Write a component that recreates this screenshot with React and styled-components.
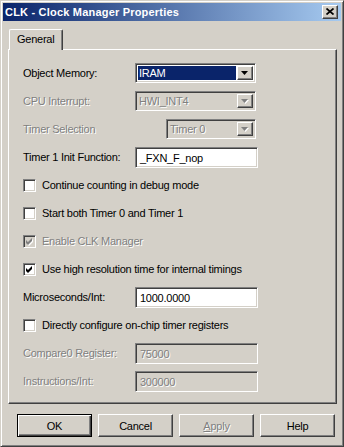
import React from "react";
import styled, { createGlobalStyle, css } from "styled-components";

const GlobalStyle = createGlobalStyle`
  html, body {
    margin: 0;
    padding: 0;
    background: #d4d0c8;
  }
  * {
    box-sizing: border-box;
  }
`;

const face = "#d4d0c8";
const shadow = "#808080";
const dark = "#404040";

const disabledText = css`
  color: ${shadow};
  text-shadow: 1px 1px 0 #fff;
`;

const Window = styled.div`
  width: 344px;
  height: 447px;
  display: flex;
  flex-direction: column;
  padding: 2px;
  background: ${face};
  border: 1px solid;
  border-color: ${face} ${dark} ${dark} ${face};
  box-shadow: inset 1px 1px #fff, inset -1px -1px ${shadow};
  font-family: "Liberation Sans", Arial, sans-serif;
  font-size: 11px;
  letter-spacing: -0.25px;
  color: #000;
`;

const TitleBar = styled.div`
  height: 18px;
  display: flex;
  align-items: center;
  justify-content: space-between;
  padding: 0 3px 0 2px;
  background: linear-gradient(to right, #0a246a, #a6caf0);
  color: #fff;
  font-weight: bold;
  font-size: 11px;
  letter-spacing: 0.2px;
`;

const CloseButton = styled.div`
  width: 16px;
  height: 14px;
  display: flex;
  align-items: center;
  justify-content: center;
  background: ${face};
  border: 1px solid;
  border-color: #fff ${dark} ${dark} #fff;
  box-shadow: inset -1px -1px ${shadow};
  padding-bottom: 1px;
`;

const Body = styled.div`
  flex: 1;
  display: flex;
  flex-direction: column;
  padding: 8px 4px 7px 5px;
`;

const TabStrip = styled.div`
  height: 20px;
  display: flex;
  align-items: flex-end;
  padding-left: 1px;
`;

const Tab = styled.div`
  position: relative;
  z-index: 1;
  height: 21px;
  margin-bottom: -1px;
  width: 54px;
  padding: 3px 0 0 7px;
  background: ${face};
  border-top: 1px solid #fff;
  border-left: 1px solid #fff;
  border-right: 1px solid ${dark};
  border-radius: 2px 2px 0 0;
  box-shadow: inset -1px 0 ${shadow};
`;

const Panel = styled.div`
  flex: 1;
  display: flex;
  flex-direction: column;
  padding: 9px 0 0 14px;
  border: 1px solid;
  border-color: #fff ${dark} ${dark} #fff;
  box-shadow: inset -1px -1px ${shadow};
`;

const Row = styled.div`
  height: 28px;
  display: flex;
  align-items: center;
`;

const Label = styled.span`
  width: ${(p) => p.$w || 112}px;
  flex-shrink: 0;
  white-space: nowrap;
  ${(p) => p.$disabled && disabledText}
`;

const sunken = css`
  border: 1px solid;
  border-color: ${shadow} #fff #fff ${shadow};
  box-shadow: inset 1px 1px ${dark}, inset -1px -1px ${face};
`;

const Field = styled.div`
  ${sunken};
  width: ${(p) => p.$w || 123}px;
  height: 21px;
  display: flex;
  align-items: center;
  padding: 1px 0 0 4px;
  background: ${(p) => (p.$disabled ? face : "#fff")};
  ${(p) => p.$disabled && disabledText}
`;

const Select = styled.div`
  ${sunken};
  width: ${(p) => p.$w || 121}px;
  height: 20px;
  display: flex;
  align-items: stretch;
  padding: 2px;
  background: ${(p) => (p.$disabled ? face : "#fff")};
`;

const SelectValue = styled.div`
  flex: 1;
  display: flex;
  align-items: center;
  padding-left: 1px;
  margin-right: 1px;
  background: ${(p) => (p.$selected ? "#0a246a" : "transparent")};
  color: ${(p) => (p.$selected ? "#fff" : "#000")};
  ${(p) => p.$disabled && disabledText}
`;

const raised = css`
  background: ${face};
  border: 1px solid;
  border-color: #fff ${dark} ${dark} #fff;
  box-shadow: inset -1px -1px ${shadow};
`;

const ArrowButton = styled.div`
  ${raised};
  width: 16px;
  display: flex;
  align-items: center;
  justify-content: center;
  padding-top: 1px;
`;

const CheckRow = styled(Row)`
  gap: 6px;
`;

const CheckBox = styled.div`
  ${sunken};
  width: 13px;
  height: 13px;
  display: flex;
  align-items: center;
  justify-content: center;
  background: ${(p) => (p.$disabled ? face : "#fff")};
`;

const CheckText = styled.span`
  white-space: nowrap;
  ${(p) => p.$disabled && disabledText}
`;

const ButtonRow = styled.div`
  display: flex;
  justify-content: flex-end;
  gap: 6px;
  margin-top: 10px;
  padding-right: 2px;
`;

const Button = styled.div`
  width: 75px;
  height: 23px;
  display: flex;
  align-items: center;
  justify-content: center;
  background: ${face};
  border: 1px solid;
  ${(p) =>
    p.$default
      ? css`
          border-color: #000;
          box-shadow: inset 1px 1px #fff, inset -1px -1px ${dark},
            inset -2px -2px ${shadow};
        `
      : css`
          border-color: #fff ${dark} ${dark} #fff;
          box-shadow: inset -1px -1px ${shadow};
        `}
  ${(p) => p.$disabled && disabledText}
`;

const Arrow = ({ disabled }) => (
  <svg width="8" height="5" viewBox="0 0 8 5" style={{ overflow: "visible" }}>
    {disabled && <polygon points="1,1 8,1 4.5,5" fill="#fff" />}
    <polygon points="0,0 7,0 3.5,4" fill={disabled ? shadow : "#000"} />
  </svg>
);

const Check = ({ disabled }) => (
  <svg width="9" height="9" viewBox="0 0 9 9" style={{ overflow: "visible" }}>
    {disabled && (
      <polygon points="2,4 4,6 8,2 8,5 4,9 2,7" fill="#fff" />
    )}
    <polygon
      points="1,3 3,5 7,1 7,4 3,8 1,6"
      fill={disabled ? shadow : "#000"}
    />
  </svg>
);

const FieldRow = ({ label, value, disabled, w }) => (
  <Row>
    <Label $disabled={disabled}>{label}</Label>
    <Field $disabled={disabled} $w={w}>
      {value}
    </Field>
  </Row>
);

const CheckOption = ({ label, checked, disabled }) => (
  <CheckRow>
    <CheckBox $disabled={disabled}>
      {checked && <Check disabled={disabled} />}
    </CheckBox>
    <CheckText $disabled={disabled}>{label}</CheckText>
  </CheckRow>
);

export default function App() {
  return (
    <>
      <GlobalStyle />
      <Window>
        <TitleBar>
          <span>CLK - Clock Manager Properties</span>
          <CloseButton>
            <svg width="8" height="7" viewBox="0 0 8 7">
              <path d="M0.5 0.5 L7.5 6.5 M7.5 0.5 L0.5 6.5" stroke="#000" strokeWidth="1.7" />
            </svg>
          </CloseButton>
        </TitleBar>
        <Body>
          <TabStrip>
            <Tab>General</Tab>
          </TabStrip>
          <Panel>
            <Row>
              <Label>Object Memory:</Label>
              <Select>
                <SelectValue $selected>IRAM</SelectValue>
                <ArrowButton>
                  <Arrow />
                </ArrowButton>
              </Select>
            </Row>
            <Row>
              <Label $disabled>CPU Interrupt:</Label>
              <Select $disabled>
                <SelectValue $disabled>HWI_INT4</SelectValue>
                <ArrowButton>
                  <Arrow disabled />
                </ArrowButton>
              </Select>
            </Row>
            <Row>
              <Label $disabled $w={143}>
                Timer Selection
              </Label>
              <Select $disabled $w={90}>
                <SelectValue $disabled>Timer 0</SelectValue>
                <ArrowButton>
                  <Arrow disabled />
                </ArrowButton>
              </Select>
            </Row>
            <FieldRow label="Timer 1 Init Function:" value="_FXN_F_nop" />
            <CheckOption label="Continue counting in debug mode" />
            <CheckOption label="Start both Timer 0 and Timer 1" />
            <CheckOption label="Enable CLK Manager" checked disabled />
            <CheckOption label="Use high resolution time for internal timings" checked />
            <FieldRow label="Microseconds/Int:" value="1000.0000" />
            <CheckOption label="Directly configure on-chip timer registers" />
            <FieldRow label="Compare0 Register:" value="75000" disabled />
            <FieldRow label="Instructions/Int:" value="300000" disabled />
          </Panel>
          <ButtonRow>
            <Button $default>OK</Button>
            <Button>Cancel</Button>
            <Button $disabled>
              <span>
                <u>A</u>pply
              </span>
            </Button>
            <Button>Help</Button>
          </ButtonRow>
        </Body>
      </Window>
    </>
  );
}
